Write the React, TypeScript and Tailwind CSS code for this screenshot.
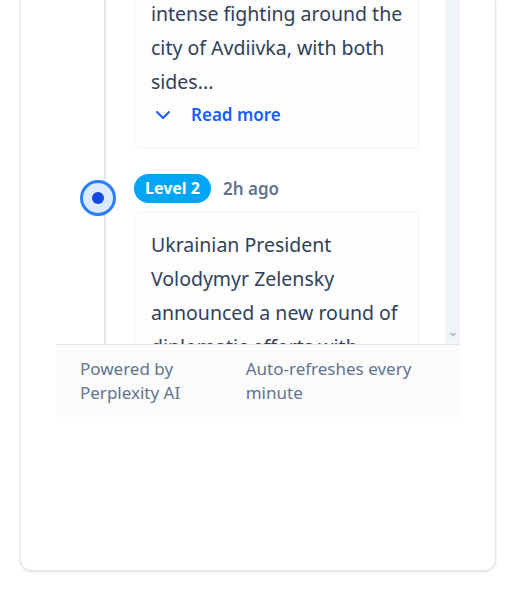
import React from 'react';
import { ChevronDown } from 'lucide-react';

interface Update {
  id: number;
  level: number;
  time: string;
  text: string;
}

const updates: Update[] = [
  {
    id: 1,
    level: 3,
    time: '1h ago',
    text: 'Heavy shelling continues in the Donetsk region, with intense fighting around the city of Avdiivka, with both sides...',
  },
  {
    id: 2,
    level: 2,
    time: '2h ago',
    text: 'Ukrainian President Volodymyr Zelensky announced a new round of diplomatic efforts with European partners to secure additional support...',
  },
];

function TimelineItem({ item, itemRef }: { item: Update; itemRef?: React.Ref<HTMLDivElement> }) {
  return (
    <div ref={itemRef} className="relative pb-[25px]">
      <div className="absolute -left-[54px] top-[6px] flex h-9 w-9 items-center justify-center rounded-full border-[3px] border-blue-500 bg-blue-100">
        <div className="h-3 w-3 rounded-full bg-blue-700" />
      </div>
      <div className="flex h-[29px] items-center gap-3">
        <span className="rounded-full bg-sky-500 px-[11px] text-[16px] font-bold leading-[29px] text-white">
          Level {item.level}
        </span>
        <span className="text-[17px] font-semibold text-slate-500">{item.time}</span>
      </div>
      <div className="mt-2 rounded-lg border border-[#f1f3f6] bg-[#fdfdfe] px-4 pb-[19px] pt-4">
        <p className="text-[19.5px] leading-[34px] text-slate-700">{item.text}</p>
        <button className="mt-[2px] flex h-7 items-center gap-4 text-[17px] font-semibold text-blue-600">
          <ChevronDown className="h-6 w-6" strokeWidth={2} />
          Read more
        </button>
      </div>
    </div>
  );
}

export default function App() {
  const listRef = React.useRef<HTMLDivElement>(null);
  const secondRef = React.useRef<HTMLDivElement>(null);

  React.useLayoutEffect(() => {
    if (listRef.current && secondRef.current) {
      listRef.current.scrollTop = secondRef.current.offsetTop - 174;
    }
  }, []);

  return (
    <div className="bg-white pb-6 pl-5 font-['Noto_Sans',sans-serif]">
      <div className="flex h-[571px] w-[476px] flex-col rounded-b-xl border border-t-0 border-gray-200 bg-white px-[35px] shadow-sm">
        <div className="flex h-[344px]">
          <div ref={listRef} className="relative flex-1 overflow-hidden">
            <div className="ml-[48px] border-l-2 border-gray-200 pl-7 pr-[25px] pt-6">
              {updates.map((item, i) => (
                <TimelineItem key={item.id} item={item} itemRef={i === 1 ? secondRef : undefined} />
              ))}
            </div>
          </div>
          <div className="flex w-[15px] flex-col items-center justify-end bg-[#f1f5f9] pb-[7px]">
            <svg width="8" height="4" viewBox="0 0 8 4">
              <path d="M0 0h8L4 4z" fill="#bfc6cf" />
            </svg>
          </div>
        </div>
        <div className="flex justify-between border-t border-gray-200 bg-[#fbfbfc] px-6 py-3 text-[17px] leading-6 text-slate-500">
          <span>Powered by Perplexity AI</span>
          <span>Auto-refreshes every minute</span>
        </div>
      </div>
    </div>
  );
}
